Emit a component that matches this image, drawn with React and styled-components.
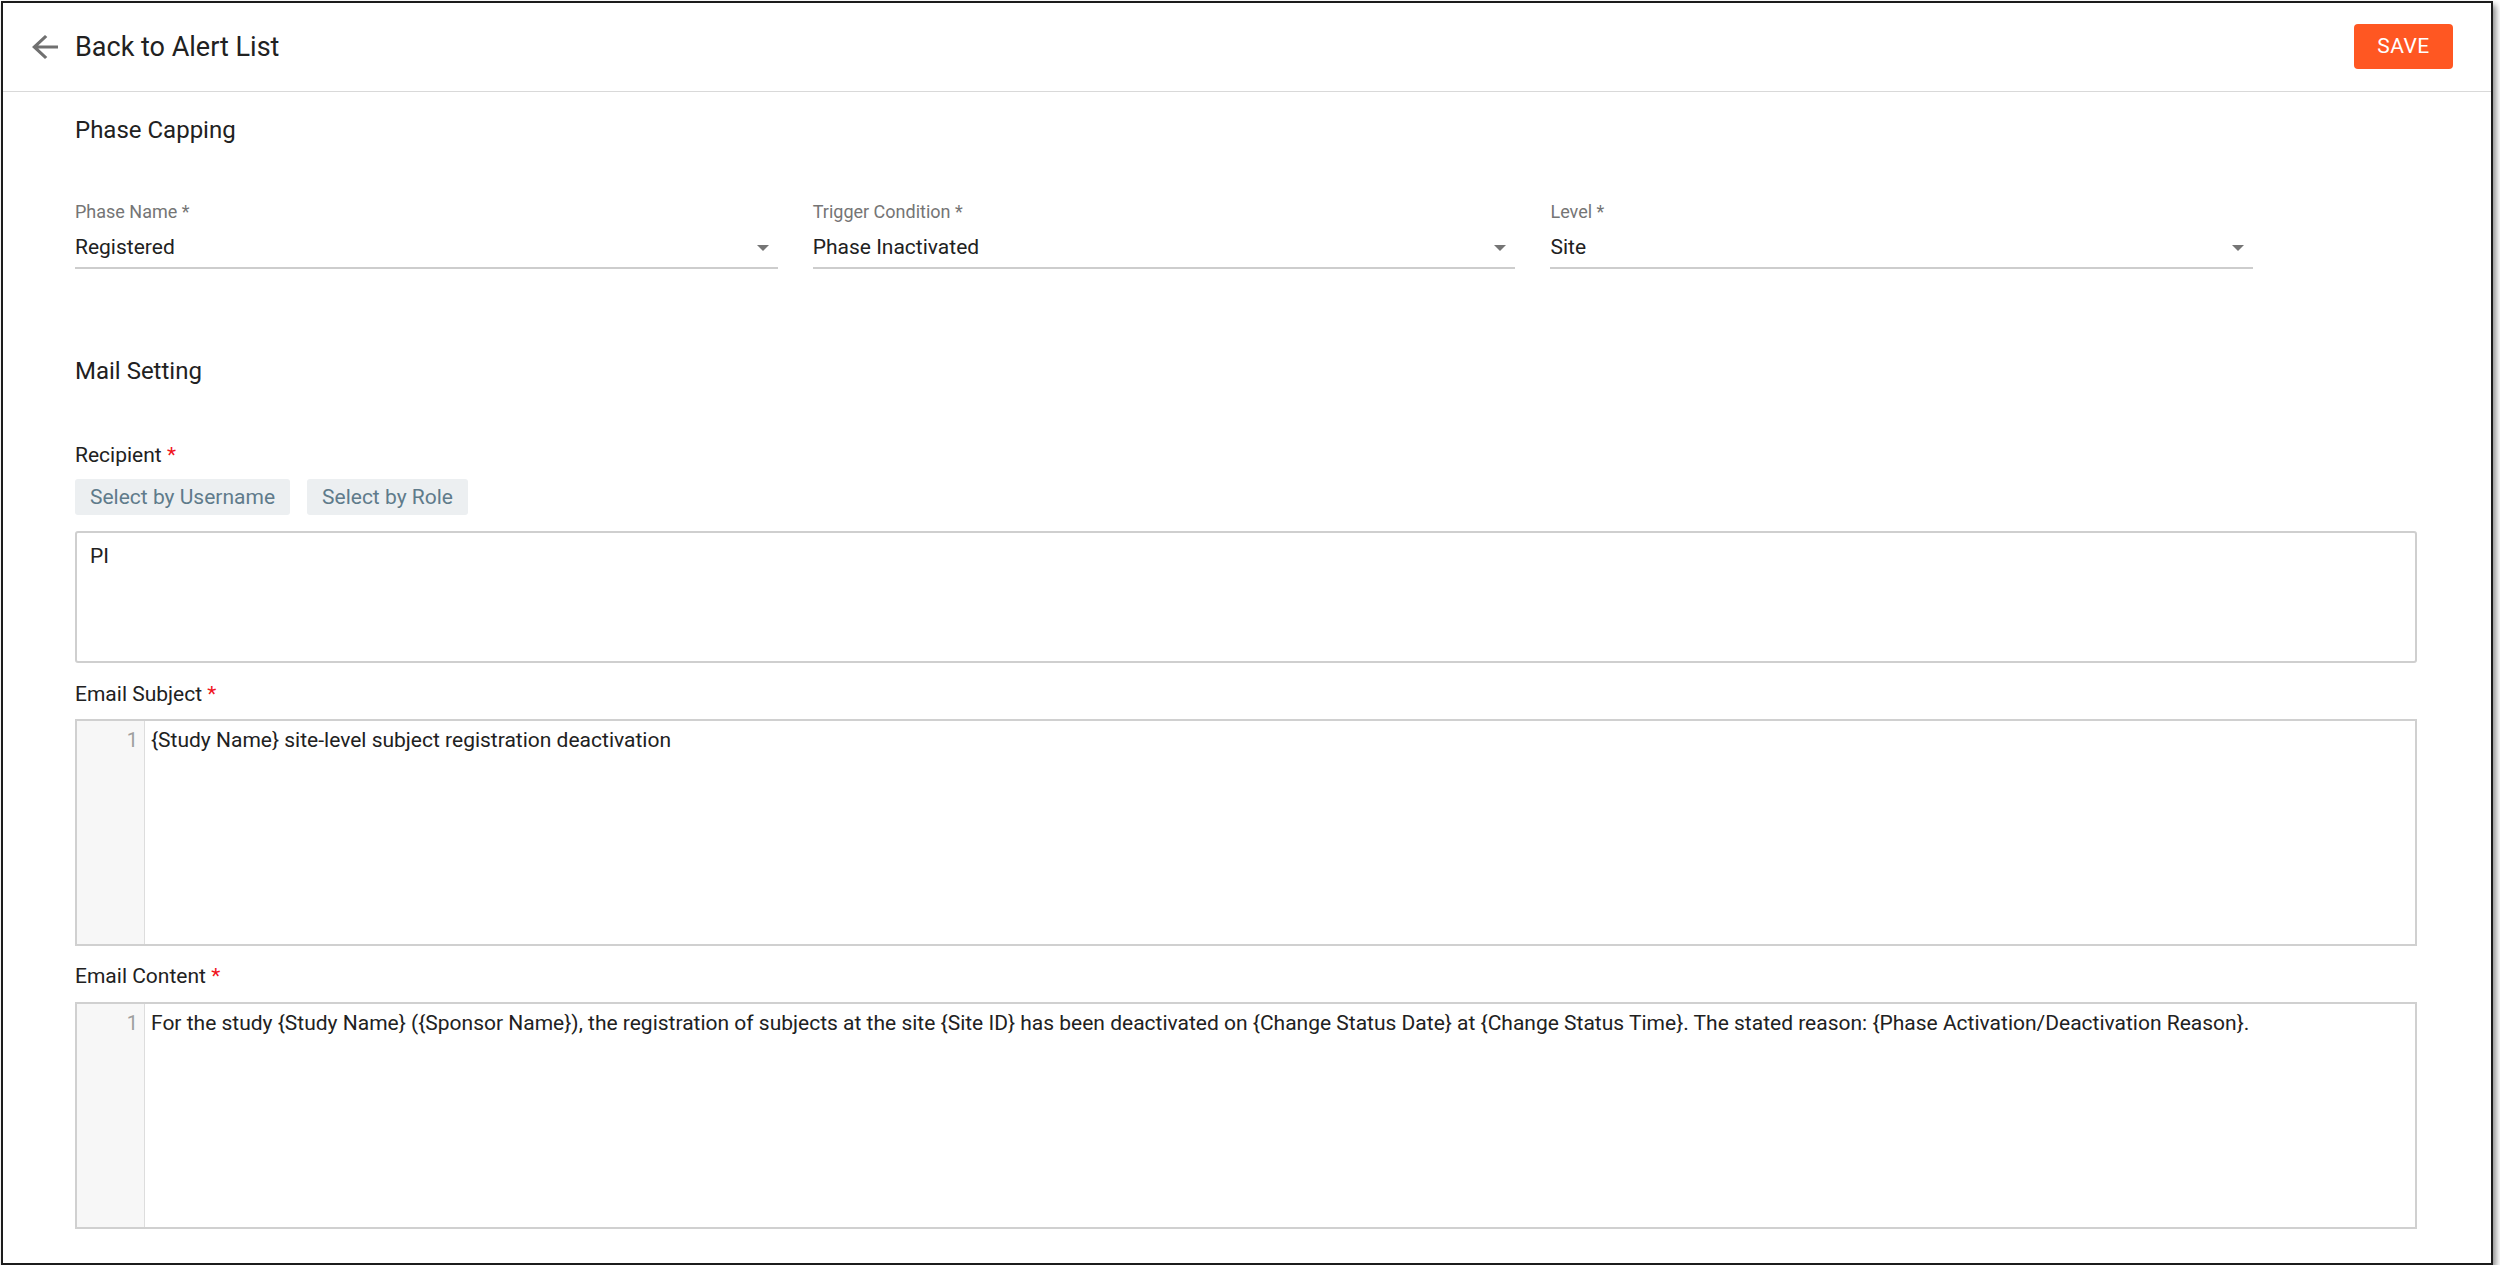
import React from "react";
import styled, { createGlobalStyle } from "styled-components";

const GlobalStyle = createGlobalStyle`
  html, body {
    margin: 0;
    padding: 0;
    background: #ffffff;
  }
  body {
    font-family: Roboto, "Liberation Sans", Arial, sans-serif;
    color: #212121;
  }
  * { box-sizing: border-box; }
`;

const Frame = styled.div`
  margin: 1px 0 0 1px;
  width: 2492px;
  height: 1264px;
  border: 2px solid #1c1c1c;
  background: #ffffff;
  box-shadow: 3px 4px 6px rgba(0, 0, 0, 0.45);
  display: flex;
  flex-direction: column;
`;

const Header = styled.header`
  height: 89px;
  flex: none;
  display: flex;
  align-items: center;
  justify-content: space-between;
  padding: 0 38px 0 29px;
  border-bottom: 1px solid #d9d9d9;
`;

const BackLink = styled.a`
  display: flex;
  align-items: center;
  gap: 17px;
  color: #212121;
  text-decoration: none;
  cursor: pointer;
`;

const BackIcon = styled.svg`
  width: 26px;
  height: 24px;
  flex: none;
  fill: #707070;
`;

const HeaderTitle = styled.span`
  font-size: 27px;
  line-height: 32px;
  font-weight: 400;
  color: #212121;
`;

const SaveButton = styled.button`
  width: 99px;
  height: 45px;
  border: none;
  border-radius: 4px;
  background: #ff5722;
  color: #ffffff;
  font-family: Roboto, "Liberation Sans", Arial, sans-serif;
  font-size: 21px;
  font-weight: 400;
  letter-spacing: 0.5px;
  margin-bottom: 2px;
  cursor: pointer;
`;

const Content = styled.main`
  flex: 1;
  display: flex;
  flex-direction: column;
  padding: 24px 74px 35px 72px;
`;

const SectionTitle = styled.h2`
  margin: ${(p) => (p.$gap ? `${p.$gap}px` : "0")} 0 0;
  font-size: 24px;
  line-height: 28px;
  font-weight: 400;
  color: #212121;
`;

const SelectRow = styled.div`
  margin-top: 57px;
  display: grid;
  grid-template-columns: repeat(3, 30%);
  column-gap: 1.5%;
`;

const SelectField = styled.div`
  display: flex;
  flex-direction: column;
  border-bottom: 2px solid #cdcdcd;
  padding-bottom: 7px;
`;

const SelectLabel = styled.label`
  font-size: 18px;
  line-height: 21px;
  color: #757575;
`;

const SelectValueRow = styled.div`
  margin-top: 12px;
  display: flex;
  align-items: center;
  justify-content: space-between;
  padding-right: 9px;
`;

const SelectValue = styled.span`
  font-size: 21px;
  line-height: 26px;
  color: #212121;
`;

const DropArrow = styled.svg`
  width: 12px;
  height: 6px;
  fill: #757575;
  margin-top: 2px;
`;

const FieldLabel = styled.div`
  margin-top: ${(p) => p.$gap}px;
  font-size: 21px;
  line-height: 26px;
  color: #212121;
`;

const Required = styled.span`
  color: #f0141e;
`;

const ButtonRow = styled.div`
  margin-top: 11px;
  display: flex;
  gap: 17px;
`;

const PickButton = styled.button`
  height: 36px;
  padding: 0 15px;
  border: none;
  border-radius: 3px;
  background: #eceff1;
  color: #5f7b8b;
  font-family: Roboto, "Liberation Sans", Arial, sans-serif;
  font-size: 21px;
  cursor: pointer;
`;

const RecipientBox = styled.div`
  margin-top: 16px;
  height: 132px;
  border: 2px solid #cfcfcf;
  border-radius: 3px;
  padding: 10px 13px;
  font-size: 21px;
  line-height: 26px;
  color: #212121;
`;

const Editor = styled.div`
  margin-top: ${(p) => p.$gap}px;
  height: 227px;
  border: 2px solid #d0d0d0;
  display: flex;
  background: #ffffff;
`;

const Gutter = styled.div`
  width: 68px;
  flex: none;
  background: #f7f7f7;
  border-right: 1px solid #dddddd;
  padding: 6px 6px 0 0;
  text-align: right;
  font-size: 20px;
  line-height: 26px;
  color: #9e9e9e;
`;

const EditorText = styled.div`
  flex: 1;
  padding: 6px 0 0 6px;
  font-size: 21px;
  line-height: 26px;
  color: #212121;
  white-space: nowrap;
  overflow: hidden;
`;

const selects = [
  { label: "Phase Name *", value: "Registered" },
  { label: "Trigger Condition *", value: "Phase Inactivated" },
  { label: "Level *", value: "Site" },
];

function Select({ label, value }) {
  return (
    <SelectField>
      <SelectLabel>{label}</SelectLabel>
      <SelectValueRow>
        <SelectValue>{value}</SelectValue>
        <DropArrow viewBox="0 0 10 5">
          <path d="M0 0l5 5 5-5z" />
        </DropArrow>
      </SelectValueRow>
    </SelectField>
  );
}

function CodeEditor({ gap, text }) {
  return (
    <Editor $gap={gap}>
      <Gutter>1</Gutter>
      <EditorText>{text}</EditorText>
    </Editor>
  );
}

export default function App() {
  return (
    <>
      <GlobalStyle />
      <Frame>
        <Header>
          <BackLink>
            <BackIcon viewBox="4 4 16 16" preserveAspectRatio="none">
              <path d="M20 11H7.83l5.59-5.59L12 4l-8 8 8 8 1.41-1.41L7.83 13H20v-2z" />
            </BackIcon>
            <HeaderTitle>Back to Alert List</HeaderTitle>
          </BackLink>
          <SaveButton>SAVE</SaveButton>
        </Header>
        <Content>
          <SectionTitle>Phase Capping</SectionTitle>
          <SelectRow>
            {selects.map((s) => (
              <Select key={s.label} label={s.label} value={s.value} />
            ))}
          </SelectRow>
          <SectionTitle $gap={88}>Mail Setting</SectionTitle>
          <FieldLabel $gap={57}>
            Recipient <Required>*</Required>
          </FieldLabel>
          <ButtonRow>
            <PickButton>Select by Username</PickButton>
            <PickButton>Select by Role</PickButton>
          </ButtonRow>
          <RecipientBox>PI</RecipientBox>
          <FieldLabel $gap={18}>
            Email Subject <Required>*</Required>
          </FieldLabel>
          <CodeEditor gap={12} text="{Study Name} site-level subject registration deactivation" />
          <FieldLabel $gap={17}>
            Email Content <Required>*</Required>
          </FieldLabel>
          <CodeEditor
            gap={13}
            text="For the study {Study Name} ({Sponsor Name}), the registration of subjects at the site {Site ID} has been deactivated on {Change Status Date} at {Change Status Time}. The stated reason: {Phase Activation/Deactivation Reason}."
          />
        </Content>
      </Frame>
    </>
  );
}
